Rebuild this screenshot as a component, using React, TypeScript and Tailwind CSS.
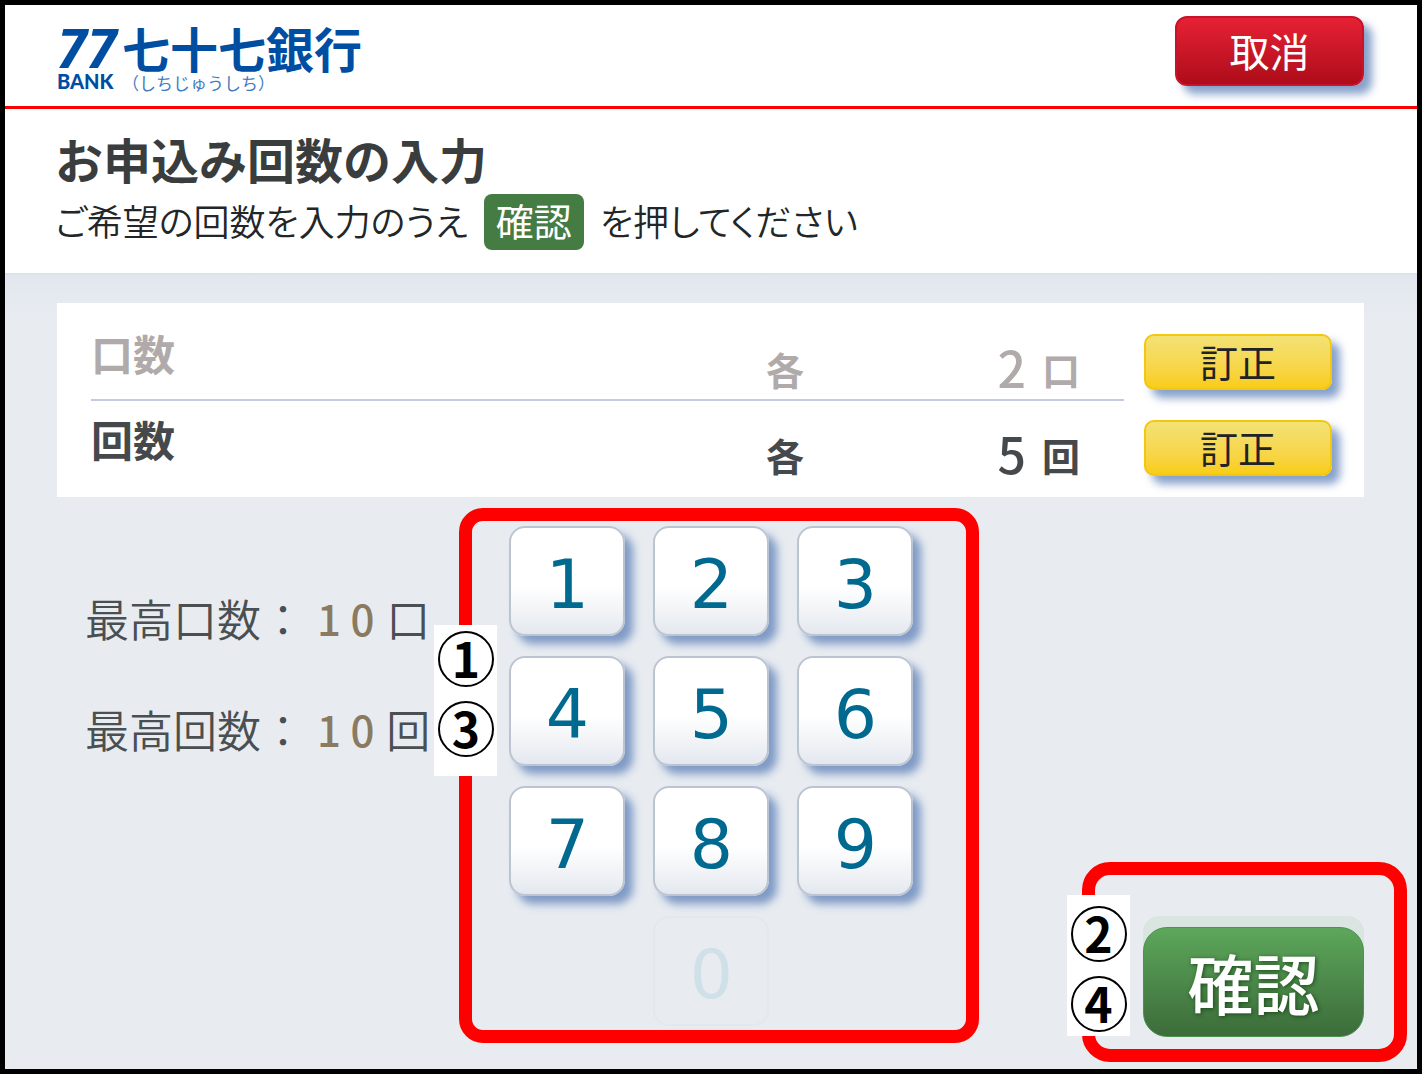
import React, { useState } from "react";

const SHADOW = "shadow-[8px_8px_8px_0px_rgba(70,110,175,0.65)]";

function Logo() {
  return (
    <a href="#" aria-label="七十七銀行" className="flex items-start gap-1 text-[#004ea2]">
      <span className="flex w-[61px] flex-col">
        <span className="font-['Open_Sans','Noto_Sans',sans-serif] text-[54px] leading-[48px] font-bold italic">77</span>
        <span className="font-['Lato',sans-serif] text-[20px] leading-[20px] font-black">BANK</span>
      </span>
      <span className="flex flex-col">
        <span className="text-[48px] leading-[48px] font-bold">七十七銀行</span>
        <span className="text-[17px] leading-[24px] text-[#3f7cc0]">（しちじゅうしち）</span>
      </span>
    </a>
  );
}

function CorrectButton({ label }: { label: string }) {
  return (
    <button
      type="button"
      aria-label={label}
      className={`h-14 w-[188px] rounded-[10px] border-2 border-[#f3c60f] bg-linear-to-b from-[#f3e274] to-[#f9cd10] pb-0.5 text-[38px] leading-none text-[#1f2326] ${SHADOW}`}
    >
      訂正
    </button>
  );
}

function AmountRow({ label, value, unit, tone }: { label: string; value: string; unit: string; tone: string }) {
  return (
    <div className={`flex h-20 items-end pr-11 font-bold ${tone}`}>
      <dt className="flex-1 self-start text-[42px] leading-[68px]">{label}</dt>
      <dd className="flex items-start text-[38px] leading-[60px]">
        <span>各</span>
        <span className="w-[222px] text-right text-[50px] leading-[54px] font-medium">{value}</span>
        <span className="ml-4">{unit}</span>
      </dd>
    </div>
  );
}

function Limit({ label, unit }: { label: string; unit: string }) {
  return (
    <div className="flex items-center text-[44px] leading-[56px] font-[350] text-[#4a4f52]">
      <dt>{label}：</dt>
      <dd className="flex items-center">
        <span className="mx-3 text-[42px] font-medium text-[#8a7a60]">1 0</span>
        {unit}
      </dd>
    </div>
  );
}

function Step({ n }: { n: number }) {
  return (
    <span className="flex size-14 items-center justify-center rounded-full border-2 border-black pb-1 text-[48px] leading-none font-bold text-black">
      {n}
    </span>
  );
}

function Key({ n, onPress }: { n: number; onPress: (n: number) => void }) {
  return (
    <button
      type="button"
      onClick={() => onPress(n)}
      className={`h-[110px] w-[116px] rounded-2xl border-2 border-[#bcc4d1] bg-linear-to-b from-white from-55% to-[#e4e8ee] pt-2 font-['DejaVu_Sans',sans-serif] text-[68px] leading-none text-[#00698f] ${SHADOW}`}
    >
      {n}
    </button>
  );
}

export default function App() {
  const [count, setCount] = useState(5);

  return (
    <div
      lang="ja"
      className="border-[5px] border-black bg-[#e8ecf1] font-['Noto_Sans_CJK_JP',sans-serif] text-[#3a3d3e]"
    >
      <header className="flex h-[104px] items-start justify-between border-b-[3px] border-[#f00] bg-white pr-[53px] pl-[52px]">
        <div className="pt-[18px]">
          <Logo />
        </div>
        <button
          type="button"
          className={`mt-[11px] h-[70px] w-[189px] rounded-xl border-2 border-[#c8142a] bg-linear-to-b from-[#e62134] to-[#ae0c1a] pb-0.5 text-[40px] leading-none text-white ${SHADOW}`}
        >
          取消
        </button>
      </header>

      <section className="border-b-2 border-[#dae2ea] bg-white px-[50px] pt-[21px] pb-[23px]">
        <h1 className="text-[48px] leading-[56px] font-bold">お申込み回数の入力</h1>
        <p className="mt-2 flex items-start text-[36px] leading-[52px] text-[#222628] [font-feature-settings:'palt']">
          <span className="font-[350]">ご希望の回数を入力のうえ</span>
          <span className="mx-4 h-14 w-[100px] rounded-lg bg-[#457c43] text-center text-[38px] text-white">確認</span>
          <span className="font-[350]">を押してください</span>
        </p>
      </section>

      <main>
        <div className="bg-linear-to-b from-[#e2e7ef] to-[#e8ecf1] to-20% pt-7 pr-[53px] pl-[52px]">
          <section className="flex bg-white pr-8 pl-[34px]">
            <dl className="flex-1 pt-4 pb-3">
              <AmountRow label="口数" value="2" unit="口" tone="text-[#b0abaa]" />
              <div className="border-t-2 border-[#c1cce0] pt-1">
                <AmountRow label="回数" value={String(count)} unit="回" tone="text-[#45494c]" />
              </div>
            </dl>
            <div className="ml-5 flex flex-col gap-[30px] pt-[31px]">
              <CorrectButton label="口数を訂正" />
              <CorrectButton label="回数を訂正" />
            </div>
          </section>
        </div>

        <section className="flex items-start pt-[11px] pr-2.5 pb-[7px] pl-20">
          <dl className="flex flex-col gap-[55px] pt-[82px]">
            <Limit label="最高口数" unit="口" />
            <Limit label="最高回数" unit="回" />
          </dl>

          <div className="relative mb-[19px] ml-[29px] rounded-3xl border-[13px] border-[#f00] pt-[5px] pr-[53px] pb-1 pl-[37px]">
            <div className="grid grid-cols-3 gap-x-7 gap-y-5">
              {[1, 2, 3, 4, 5, 6, 7, 8, 9].map((n) => (
                <Key key={n} n={n} onPress={setCount} />
              ))}
              <button
                type="button"
                disabled
                className="col-start-2 h-[110px] w-[116px] rounded-2xl border-2 border-[#e4e8ed] pt-2 font-['DejaVu_Sans',sans-serif] text-[68px] leading-none text-[#d0e0e8]"
              >
                0
              </button>
            </div>
            <div className="absolute top-[104px] -left-[38px] flex h-[151px] w-[63px] flex-col items-center gap-3.5 bg-white pt-1.5">
              <Step n={1} />
              <Step n={3} />
            </div>
          </div>

          <div className="relative ml-auto h-[200px] w-[325px] self-end rounded-[28px] border-[13px] border-[#f00] pt-[41px] pl-12">
            <div className="h-[110px] w-[221px] rounded-2xl bg-[#dae4e1] pt-[11px]">
              <button
                type="button"
                className="h-[110px] w-full rounded-3xl border border-[#4c9150] bg-linear-to-b from-[#5da75b] to-[#3c6c3a] pb-0.5 text-[66px] leading-none font-medium text-white text-shadow-[1px_1px_4px_rgba(15,60,15,0.8)]"
              >
                確認
              </button>
            </div>
            <div className="absolute top-5 -left-7 flex h-[141px] w-[63px] flex-col items-center gap-3.5 bg-white pt-[11px]">
              <Step n={2} />
              <Step n={4} />
            </div>
          </div>
        </section>
      </main>
    </div>
  );
}
